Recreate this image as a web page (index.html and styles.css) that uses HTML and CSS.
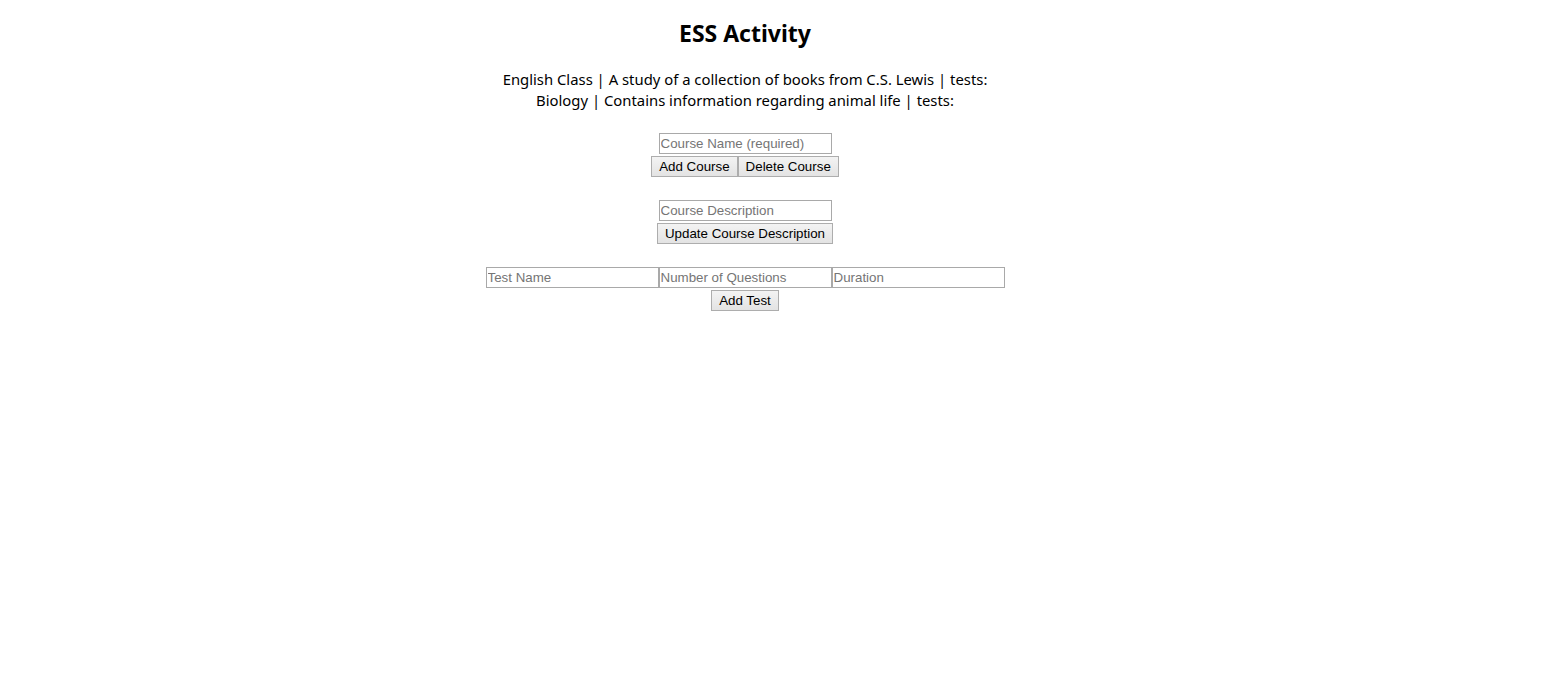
FILE: index.html
```html
<!DOCTYPE html>
<html>
<head>
<meta charset="utf-8">
<link rel="stylesheet" href="styles.css">
</head>
<body>
<div class="page">
  <h1 class="title">ESS Activity</h1>
  <div class="courses">
    <div class="course">English Class | A study of a collection of books from C.S. Lewis | tests:</div>
    <div class="course">Biology | Contains information regarding animal life | tests:</div>
  </div>
  <div class="group">
    <input class="field" type="text" placeholder="Course Name (required)">
    <div class="buttons">
      <button class="btn">Add Course</button><button class="btn">Delete Course</button>
    </div>
  </div>
  <div class="group">
    <input class="field" type="text" placeholder="Course Description">
    <div class="buttons">
      <button class="btn">Update Course Description</button>
    </div>
  </div>
  <div class="group">
    <div class="fields"><input class="field" type="text" placeholder="Test Name"><input class="field" type="text" placeholder="Number of Questions"><input class="field" type="text" placeholder="Duration"></div>
    <div class="buttons">
      <button class="btn">Add Test</button>
    </div>
  </div>
</div>
</body>
</html>
```

FILE: styles.css
```css
html, body {
  margin: 0;
  padding: 0;
  background: #ffffff;
}

.page {
  width: 1490px;
  display: flex;
  flex-direction: column;
  align-items: center;
  font-family: "Noto Sans", "Open Sans", sans-serif;
  color: #000;
}

.title {
  margin: 17px 0 0 0;
  font-size: 23px;
  line-height: 32px;
  font-weight: 700;
}

.courses {
  margin-top: 20px;
  display: flex;
  flex-direction: column;
  align-items: center;
}

.course {
  font-size: 14.85px;
  line-height: 21px;
}

.group {
  display: flex;
  flex-direction: column;
  align-items: center;
  margin-top: 22px;
}

.group + .group {
  margin-top: 23px;
}

.fields {
  display: flex;
}

.buttons {
  display: flex;
  margin-top: 2px;
}

.field {
  box-sizing: border-box;
  width: 173px;
  height: 21px;
  margin: 0;
  padding: 1px 1px;
  border: 1px solid #a9a9a9;
  font-family: "Liberation Sans", Arial, sans-serif;
  font-size: 13.33px;
  color: #000;
  outline: none;
}

.field::placeholder {
  color: #757575;
}

.btn {
  box-sizing: border-box;
  height: 21px;
  margin: 0;
  padding: 1px 7px;
  border: 1px solid #adadad;
  background: linear-gradient(#f3f3f3, #e3e3e3);
  font-family: "Liberation Sans", Arial, sans-serif;
  font-size: 13.33px;
  color: #000;
  border-radius: 0;
}
```
